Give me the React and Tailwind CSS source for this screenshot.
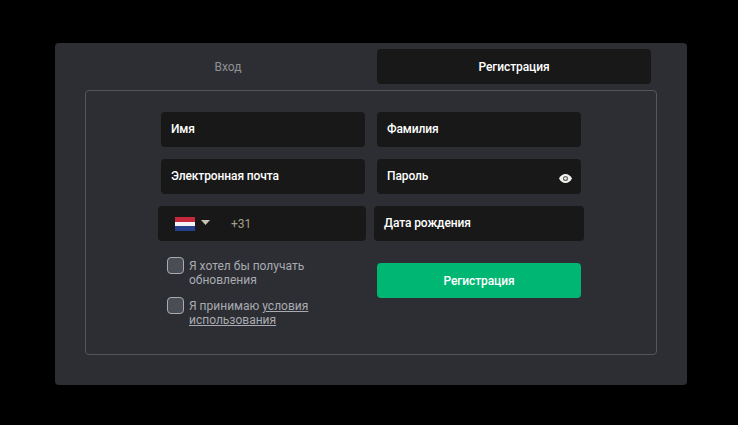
const font = "font-['Roboto',sans-serif]";

function Field({ label, children }) {
  return (
    <div className="flex h-[35px] items-center justify-between rounded-[4px] bg-[#181818] pl-[10px] pr-[9px] text-[12px] font-medium tracking-[-0.1px] text-white">
      <span className="-mt-[1px]">{label}</span>
      {children}
    </div>
  )
}

function Check({ children }) {
  return (
    <div className="flex gap-[5px]">
      <div className="h-[17px] w-[17px] shrink-0 rounded-[4px] border border-[#a9abaf] bg-[#4a4d53]"></div>
      <div className="pt-[2px] text-[12px] leading-[14px] text-[#a8abb2]">{children}</div>
    </div>
  )
}

export default function App() {
  return (
    <div className={`h-[425px] w-[738px] bg-black pl-[55px] pt-[43px] ${font}`}>
      <div className="h-[342px] w-[632px] rounded-[4px] bg-[#2d2e33] pt-[6px]">
        <div className="grid grid-cols-2 gap-3 pl-[36px] pr-[36px]">
          <div className="flex h-[35px] items-center justify-center text-[12px] text-[#8f9094]">Вход</div>
          <div className="flex h-[35px] items-center justify-center rounded-[4px] bg-[#181818] text-[12px] font-medium tracking-[-0.1px] text-white">Регистрация</div>
        </div>
        <div className="ml-[30px] mt-[6px] h-[265px] w-[572px] rounded-[4px] border border-[#55565a] pl-[75px] pt-[21px]">
          <div className="w-[420px]">
            <div className="grid grid-cols-2 gap-3">
              <Field label="Имя" />
              <Field label="Фамилия" />
            </div>
            <div className="mt-3 grid grid-cols-2 gap-3">
              <Field label="Электронная почта" />
              <Field label="Пароль">
                <svg width="13" height="9" viewBox="0 0 13 9" className="mt-[3px]">
                  <path d="M0 4.5C1.5 1.6 3.8 0 6.5 0S11.5 1.6 13 4.5C11.5 7.4 9.2 9 6.5 9S1.5 7.4 0 4.5Z" fill="#f2f2ee" />
                  <circle cx="6.5" cy="4.5" r="2.6" fill="#6b6b66" />
                  <circle cx="6.5" cy="4.5" r="1.3" fill="#f2f2ee" />
                </svg>
              </Field>
            </div>
            <div className="-ml-[3px] mt-3 grid w-[426px] grid-cols-[208px_210px] gap-2">
              <div className="flex h-[35px] items-center rounded-[4px] bg-[#181818] pl-[17px] text-[12px] text-[#a79f8c]">
                <div className="h-[14px] w-[20px] bg-[linear-gradient(#c8283c_0_33%,#f4f4f4_33%_66%,#27408b_66%)]"></div>
                <svg width="9" height="5" viewBox="0 0 9 5" className="ml-[6px] -mt-[3px]">
                  <path d="M0 0H9L4.5 5Z" fill="#c9c4b4" />
                </svg>
                <span className="ml-[21px]">+31</span>
              </div>
              <Field label="Дата рождения" />
            </div>
            <div className="mt-[16px] grid grid-cols-2 gap-3">
              <div className="flex flex-col gap-[10px] pl-[6px]">
                <Check>Я хотел бы получать<br />обновления</Check>
                <Check>Я принимаю <span className="underline">условия</span><br /><span className="underline">использования</span></Check>
              </div>
              <div className="mt-[6px] flex h-[35px] items-center justify-center rounded-[4px] bg-[#00b673] text-[12px] font-medium tracking-[-0.1px] text-white">Регистрация</div>
            </div>
          </div>
        </div>
      </div>
    </div>
  )
}
